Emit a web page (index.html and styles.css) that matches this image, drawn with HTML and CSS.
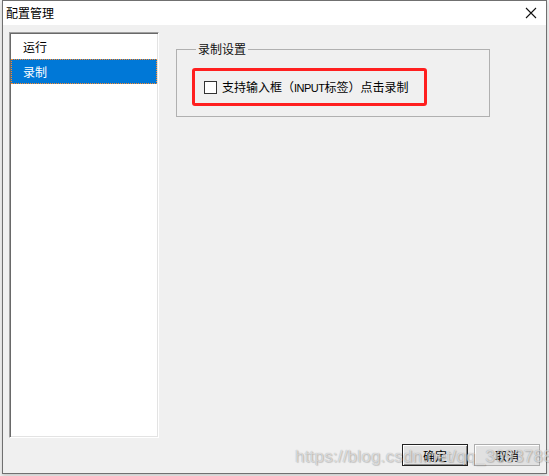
FILE: index.html
```html
<!DOCTYPE html>
<html lang="zh-CN">
<head>
<meta charset="utf-8">
<title>配置管理</title>
<link rel="stylesheet" href="styles.css">
</head>
<body>
<div class="window">
  <div class="titlebar">
    <span class="title">配置管理</span>
    <svg class="close" width="12" height="12" viewBox="0 0 12 12"><path d="M1 1 L11 11 M11 1 L1 11" stroke="#111" stroke-width="1.1" fill="none"/></svg>
  </div>
  <div class="client">
    <div class="main">
      <div class="listbox">
        <div class="item">运行</div>
        <div class="item selected">录制</div>
      </div>
      <div class="panel">
        <fieldset class="group">
          <legend class="legend">录制设置</legend>
          <div class="mark">
            <label class="check"><span class="box"></span><span class="label">支持输入框（<span class="latin">INPUT</span>标签）点击录制</span></label>
          </div>
        </fieldset>
      </div>
    </div>
    <div class="footer">
      <button class="btn default">确定</button>
      <button class="btn">取消</button>
    </div>
    <div class="watermark">https://blog.csdn.net/qq_36937881</div>
  </div>
</div>
</body>
</html>
```
FILE: styles.css
```css
html, body { margin: 0; padding: 0; }
body {
  width: 549px; height: 476px; overflow: hidden;
  background: #f3f3f3;
  font-family: "Noto Sans CJK SC", "Microsoft YaHei", sans-serif;
  font-size: 12px; color: #000;
}
.window {
  margin-left: 2px;
  width: 543px; height: 472px;
  border: 1px solid #707070;
  background: #f0f0f0;
  display: flex; flex-direction: column;
  box-shadow: 0 2px 4px rgba(0,0,0,0.18);
}
.titlebar {
  height: 24px; background: #fff;
  display: flex; align-items: center; justify-content: space-between;
  padding: 0 9px 0 3px;
}
.title { font-size: 12px; line-height: 14px; }
.close { display: block; }
.client {
  flex: 1; position: relative;
  display: flex; flex-direction: column;
  padding: 7px 6px 7px 6px;
}
.main { flex: 1; display: flex; gap: 17px; }
.listbox {
  width: 146px; height: 402px;
  background: #fff;
  border-style: solid; border-width: 1px;
  border-color: #a0a0a0 #fff #fff #a0a0a0;
  box-shadow: inset 1px 1px 0 #696969, inset -1px -1px 0 #e3e3e3;
  padding: 1px 1px 1px 1px;
}
.item {
  height: 25px; line-height: 25px; padding-left: 12px; box-sizing: border-box;
}
.item.selected {
  background: #0078d7; color: #fff;
  border: 1px dotted #ff8a2a; line-height: 23px; padding-left: 11px;
}
.panel { padding-top: 10px; }
.group {
  margin: 0; padding: 0 0 10px 15px;
  width: 297px;
  border: 1px solid #b0b0b0;
}
.legend {
  padding: 0 2px; margin-left: 4px;
  line-height: 14px; font-size: 12px; color: #111;
}
.mark {
  margin-top: 12px;
  width: 220px; height: 32px;
  border: 3px solid #ff1f1f; border-radius: 3px;
  display: flex; align-items: center;
  padding-left: 9px; box-sizing: content-box;
}
.check { display: flex; align-items: center; gap: 5px; }
.box {
  width: 11px; height: 11px; background: #fff;
  border: 1px solid #333;
}
.label { line-height: 14px; white-space: nowrap; }
.latin {
  font-family: "Liberation Sans", Arial, sans-serif;
  font-size: 11px; letter-spacing: -0.5px;
}
.footer {
  display: flex; justify-content: flex-end; gap: 6px;
  padding-top: 6px;
}
.btn {
  width: 66px; height: 22px; margin: 0; padding: 0;
  font-family: inherit; font-size: 12px; color: #000;
  background: #e1e1e1;
  border: 1px solid #adadad;
  box-shadow: inset 1px 1px 0 #fff;
}
.btn.default {
  border: 1px solid #222;
  box-shadow: inset 1px 1px 0 #fff, inset -1px -1px 0 #8a8a8a;
}
.watermark {
  position: absolute; left: 292px; bottom: 6px;
  font-family: "Liberation Sans", Arial, sans-serif;
  font-size: 17px; letter-spacing: 0.2px;
  color: rgba(255,255,255,0.6);
  text-shadow: 0 0 1px rgba(0,0,0,0.35), 1px 1px 1px rgba(0,0,0,0.15);
  pointer-events: none; white-space: nowrap;
}
```
